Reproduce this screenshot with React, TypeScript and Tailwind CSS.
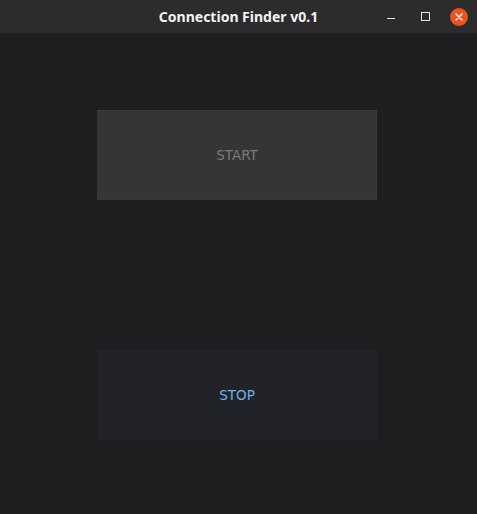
import React from 'react';

export default function App() {
  return (
    <div className="w-[477px] h-[514px] flex flex-col bg-[#1d1e20] overflow-hidden" style={{ fontFamily: '"DejaVu Sans", sans-serif' }}>
      {/* title bar */}
      <div className="relative h-[34px] shrink-0 bg-[#2c2c2c] border-b border-[#232323] flex items-center justify-center">
        <span className="text-[14px] font-bold text-[#f2f2f2]" style={{ fontFamily: '"Noto Sans", sans-serif' }}>Connection Finder v0.1</span>
        <div className="absolute right-[1px] top-0 h-full flex items-center">
          <div className="w-[34px] h-full flex items-center justify-center">
            <div className="w-[8px] h-[1px] bg-[#e0e0e0] translate-y-[2px]" />
          </div>
          <div className="w-[34px] h-full flex items-center justify-center">
            <div className="w-[9px] h-[9px] border border-[#e0e0e0]" />
          </div>
          <div className="w-[34px] h-full flex items-center justify-center">
            <div className="w-[18px] h-[18px] rounded-full bg-[#e95420] flex items-center justify-center">
              <svg width="8" height="8" viewBox="0 0 8 8">
                <path d="M1 1L7 7M7 1L1 7" stroke="#ffffff" strokeWidth="1.4" strokeLinecap="round" />
              </svg>
            </div>
          </div>
        </div>
      </div>

      {/* content */}
      <div className="flex flex-col pl-[97px] pt-[76px]">
        <button className="w-[280px] h-[90px] bg-[#343537] border border-[#38393b] text-[13.5px] text-[#7a7b7c] flex items-center justify-center">
          START
        </button>
        <button className="mt-[150px] w-[280px] h-[90px] bg-[#212328] border border-[#222429] text-[13.5px] text-[#76aeea] flex items-center justify-center">
          STOP
        </button>
      </div>
    </div>
  );
}
